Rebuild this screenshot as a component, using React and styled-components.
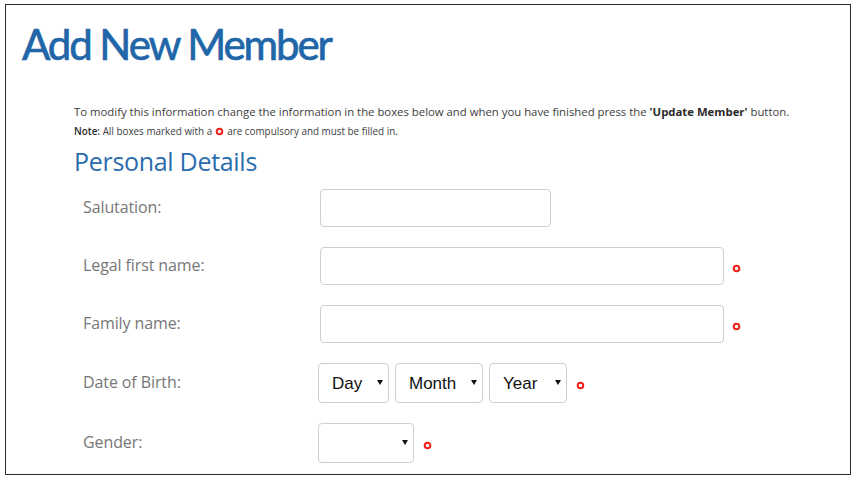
import React from "react";
import styled, { createGlobalStyle } from "styled-components";

const Global = createGlobalStyle`
  html, body { margin: 0; padding: 0; background: #fff; }
  body { font-family: "Open Sans", "Liberation Sans", sans-serif; }
`;

const Frame = styled.div`
  box-sizing: border-box;
  margin: 4px 0 0 5px;
  width: 846px;
  height: 471px;
  border: 1px solid #2e2e2e;
  overflow: hidden;
  background: #fff;
`;

const Title = styled.h1`
  margin: 0;
  padding: 15px 0 0 16px;
  font-family: Lato, sans-serif;
  font-weight: 400;
  font-size: 42px;
  line-height: 48px;
  color: #2166a8;
  letter-spacing: -2.1px;
  -webkit-text-stroke: 0.7px #2166a8;
`;

const Body = styled.div`
  padding: 36px 0 0 68px;
`;

const Intro = styled.p`
  margin: 0;
  font-family: "Open Sans", sans-serif;
  font-size: 11.35px;
  line-height: 16px;
  color: #3d3d3d;
  b { color: #2a2a2a; }
`;

const Note = styled.p`
  margin: 4px 0 0;
  font-family: "Open Sans", sans-serif;
  font-size: 9.9px;
  line-height: 14px;
  color: #3d3d3d;
  display: flex;
  align-items: center;
  gap: 3px;
  b { color: #2a2a2a; font-weight: 600; }
`;

const Section = styled.h2`
  margin: 6px 0 0;
  font-family: "Open Sans", sans-serif;
  font-weight: 400;
  font-size: 25px;
  line-height: 34px;
  color: #2b6cae;
  letter-spacing: -0.3px;
`;

const Fields = styled.div`
  display: flex;
  flex-direction: column;
  gap: 20px;
  margin-top: 11px;
  padding-left: 9px;
`;

const Row = styled.div`
  display: flex;
  align-items: center;
`;

const Label = styled.label`
  width: 237px;
  flex: none;
  font-family: "Open Sans", sans-serif;
  font-size: 16px;
  color: #777;
  margin-top: -3px;
  letter-spacing: -0.1px;
`;

const Input = styled.input`
  box-sizing: border-box;
  width: ${(p) => p.$w}px;
  height: 38px;
  border: 1px solid #cfcfcf;
  border-radius: 4px;
  background: #fff;
  outline: none;
  padding: 0 8px;
  margin: 0;
`;

const Controls = styled.div`
  display: flex;
  align-items: center;
  gap: 6px;
  margin-left: ${(p) => p.$shift || 0}px;
`;

const SelectWrap = styled.div`
  position: relative;
  width: ${(p) => p.$w}px;
  height: 40px;
`;

const Select = styled.select`
  appearance: none;
  -webkit-appearance: none;
  box-sizing: border-box;
  width: 100%;
  height: 100%;
  border: 1px solid #cfcfcf;
  border-radius: 4px;
  background: #fff;
  font-family: "Liberation Sans", Arial, sans-serif;
  font-size: 17px;
  color: #111;
  padding: 0 0 0 13px;
  margin: 0;
  outline: none;
`;

const Caret = styled.span`
  position: absolute;
  right: 6px;
  top: 17px;
  width: 0;
  height: 0;
  border-left: 3px solid transparent;
  border-right: 3px solid transparent;
  border-top: 5px solid #111;
  pointer-events: none;
`;

const Req = styled.span`
  display: inline-flex;
  margin-left: ${(p) => p.$ml ?? 8}px;
  margin-top: 5px;
`;

const Ring = () => (
  <svg width="9" height="9" viewBox="0 0 9 9">
    <circle cx="4.5" cy="4.5" r="2.8" fill="none" stroke="#f0201a" strokeWidth="2" />
  </svg>
);

const Star = ({ ml }) => (
  <Req $ml={ml}>
    <Ring />
  </Req>
);

const Dropdown = ({ w, children }) => (
  <SelectWrap $w={w}>
    <Select defaultValue="">{children}</Select>
    <Caret />
  </SelectWrap>
);

export default function App() {
  return (
    <>
      <Global />
      <Frame>
        <Title>Add New Member</Title>
        <Body>
          <Intro>
            To modify this information change the information in the boxes below and when you have finished press the{" "}
            <b>'Update Member'</b> button.
          </Intro>
          <Note>
            <span>
              <b>Note:</b> All boxes marked with a
            </span>
            <Ring />
            <span>are compulsory and must be filled in.</span>
          </Note>
          <Section>Personal Details</Section>
          <Fields>
            <Row>
              <Label>Salutation:</Label>
              <Input $w={231} />
            </Row>
            <Row>
              <Label>Legal first name:</Label>
              <Input $w={404} />
              <Star />
            </Row>
            <Row>
              <Label>Family name:</Label>
              <Input $w={404} />
              <Star />
            </Row>
            <Row>
              <Label>Date of Birth:</Label>
              <Controls $shift={-2}>
                <Dropdown w={71}>
                  <option value="">Day</option>
                </Dropdown>
                <Dropdown w={88}>
                  <option value="">Month</option>
                </Dropdown>
                <Dropdown w={78}>
                  <option value="">Year</option>
                </Dropdown>
                <Star ml={3} />
              </Controls>
            </Row>
            <Row>
              <Label>Gender:</Label>
              <Controls $shift={-2}>
                <Dropdown w={96}>
                  <option value=""></option>
                </Dropdown>
                <Star ml={3} />
              </Controls>
            </Row>
          </Fields>
        </Body>
      </Frame>
    </>
  );
}
